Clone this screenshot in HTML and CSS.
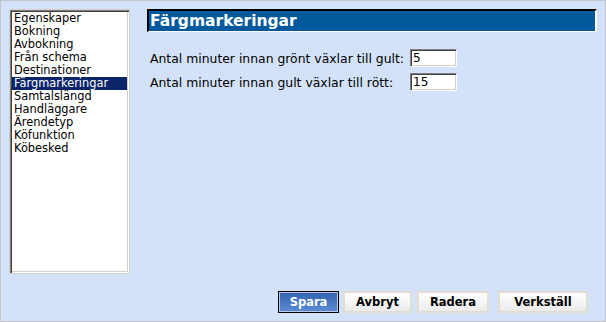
FILE: index.html
```html
<!DOCTYPE html>
<html lang="sv">
<head>
<meta charset="utf-8">
<title>Färgmarkeringar</title>
<link rel="stylesheet" href="styles.css">
</head>
<body>
<div class="window">
  <div class="main">
    <ul class="listbox">
      <li>Egenskaper</li>
      <li>Bokning</li>
      <li>Avbokning</li>
      <li>Från schema</li>
      <li>Destinationer</li>
      <li class="selected">Färgmarkeringar</li>
      <li>Samtalslängd</li>
      <li>Handläggare</li>
      <li>Ärendetyp</li>
      <li>Köfunktion</li>
      <li>Köbesked</li>
    </ul>
    <div class="content">
      <h1 class="title">Färgmarkeringar</h1>
      <div class="form">
        <label class="label" for="g2y">Antal minuter innan grönt växlar till gult:</label>
        <input class="field" id="g2y" type="text" value="5">
        <label class="label" for="y2r">Antal minuter innan gult växlar till rött:</label>
        <input class="field" id="y2r" type="text" value="15">
      </div>
    </div>
  </div>
  <div class="footer">
    <button class="btn btn-primary btn-save">Spara</button>
    <button class="btn btn-cancel">Avbryt</button>
    <button class="btn btn-delete">Radera</button>
    <button class="btn btn-apply">Verkställ</button>
  </div>
</div>
</body>
</html>
```

FILE: styles.css
```css
html, body {
  margin: 0;
  padding: 0;
  background: #d3e2f8;
}

.window {
  width: 606px;
  height: 322px;
  box-sizing: border-box;
  border: 1px solid #c2c6cc;
  background: #d3e2f8;
  padding: 8px;
  display: flex;
  flex-direction: column;
  font-family: "DejaVu Sans", Verdana, sans-serif;
  color: #000;
}

.main {
  display: flex;
  gap: 17px;
}

.listbox {
  list-style: none;
  margin: 0;
  padding: 2px 2px 0 2px;
  width: 121px;
  height: 265px;
  box-sizing: border-box;
  background: #fff;
  border: 1px solid #d4d0c8;
  box-shadow: inset 1px 1px 0 #808080, inset 2px 2px 0 #404040,
              inset -1px -1px 0 #fff, inset -2px -2px 0 #d4d0c8;
  font-size: 11.4px;
  line-height: 13px;
}

.listbox li {
  padding-left: 2px;
  height: 13px;
  white-space: nowrap;
}

.listbox li.selected {
  background: #0a246a;
  color: #fff;
}

.content {
  flex: 1;
  display: flex;
  flex-direction: column;
}

.title {
  margin: 0;
  height: 23px;
  box-sizing: border-box;
  background: #01589a;
  border-style: solid;
  border-width: 2px 2px 1px 2px;
  border-color: #000 #fff #fff #000;
  color: #fff;
  font-size: 15.5px;
  font-weight: bold;
  line-height: 20px;
  padding-left: 1px;
}

.form {
  margin-top: 17px;
  padding-left: 3px;
  display: grid;
  grid-template-columns: max-content max-content;
  column-gap: 6px;
  row-gap: 6px;
  align-items: center;
}

.label {
  font-size: 12.4px;
  padding-top: 1px;
}

.field {
  width: 47px;
  height: 18px;
  box-sizing: border-box;
  margin: 0;
  padding: 0 2px;
  border: 1px solid;
  border-color: #808080 #fff #fff #808080;
  box-shadow: inset 1px 1px 0 #404040, inset -1px -1px 0 #d4d0c8;
  background: #fff;
  font-family: "DejaVu Sans", Verdana, sans-serif;
  font-size: 12px;
  color: #000;
  outline: none;
}

.footer {
  margin-top: auto;
  display: flex;
  justify-content: flex-end;
  padding-right: 9px;
}

.btn {
  height: 22px;
  box-sizing: border-box;
  padding: 0;
  margin: 0;
  font-family: "DejaVu Sans", Verdana, sans-serif;
  font-weight: bold;
  font-size: 11.5px;
  color: #000;
  border: 2px solid #e2ddd0;
  background: linear-gradient(#ffffff, #ebebeb);
}

.btn-primary {
  color: #fff;
  border: 1px solid #000;
  box-shadow: inset 0 0 0 1px #b9c9e6;
  background: linear-gradient(#3463b0, #5a8cd4);
}

.btn-save { width: 61px; }
.btn-cancel { width: 69px; margin-left: 4px; }
.btn-delete { width: 72px; margin-left: 5px; }
.btn-apply { width: 90px; margin-left: 9px; }
```
